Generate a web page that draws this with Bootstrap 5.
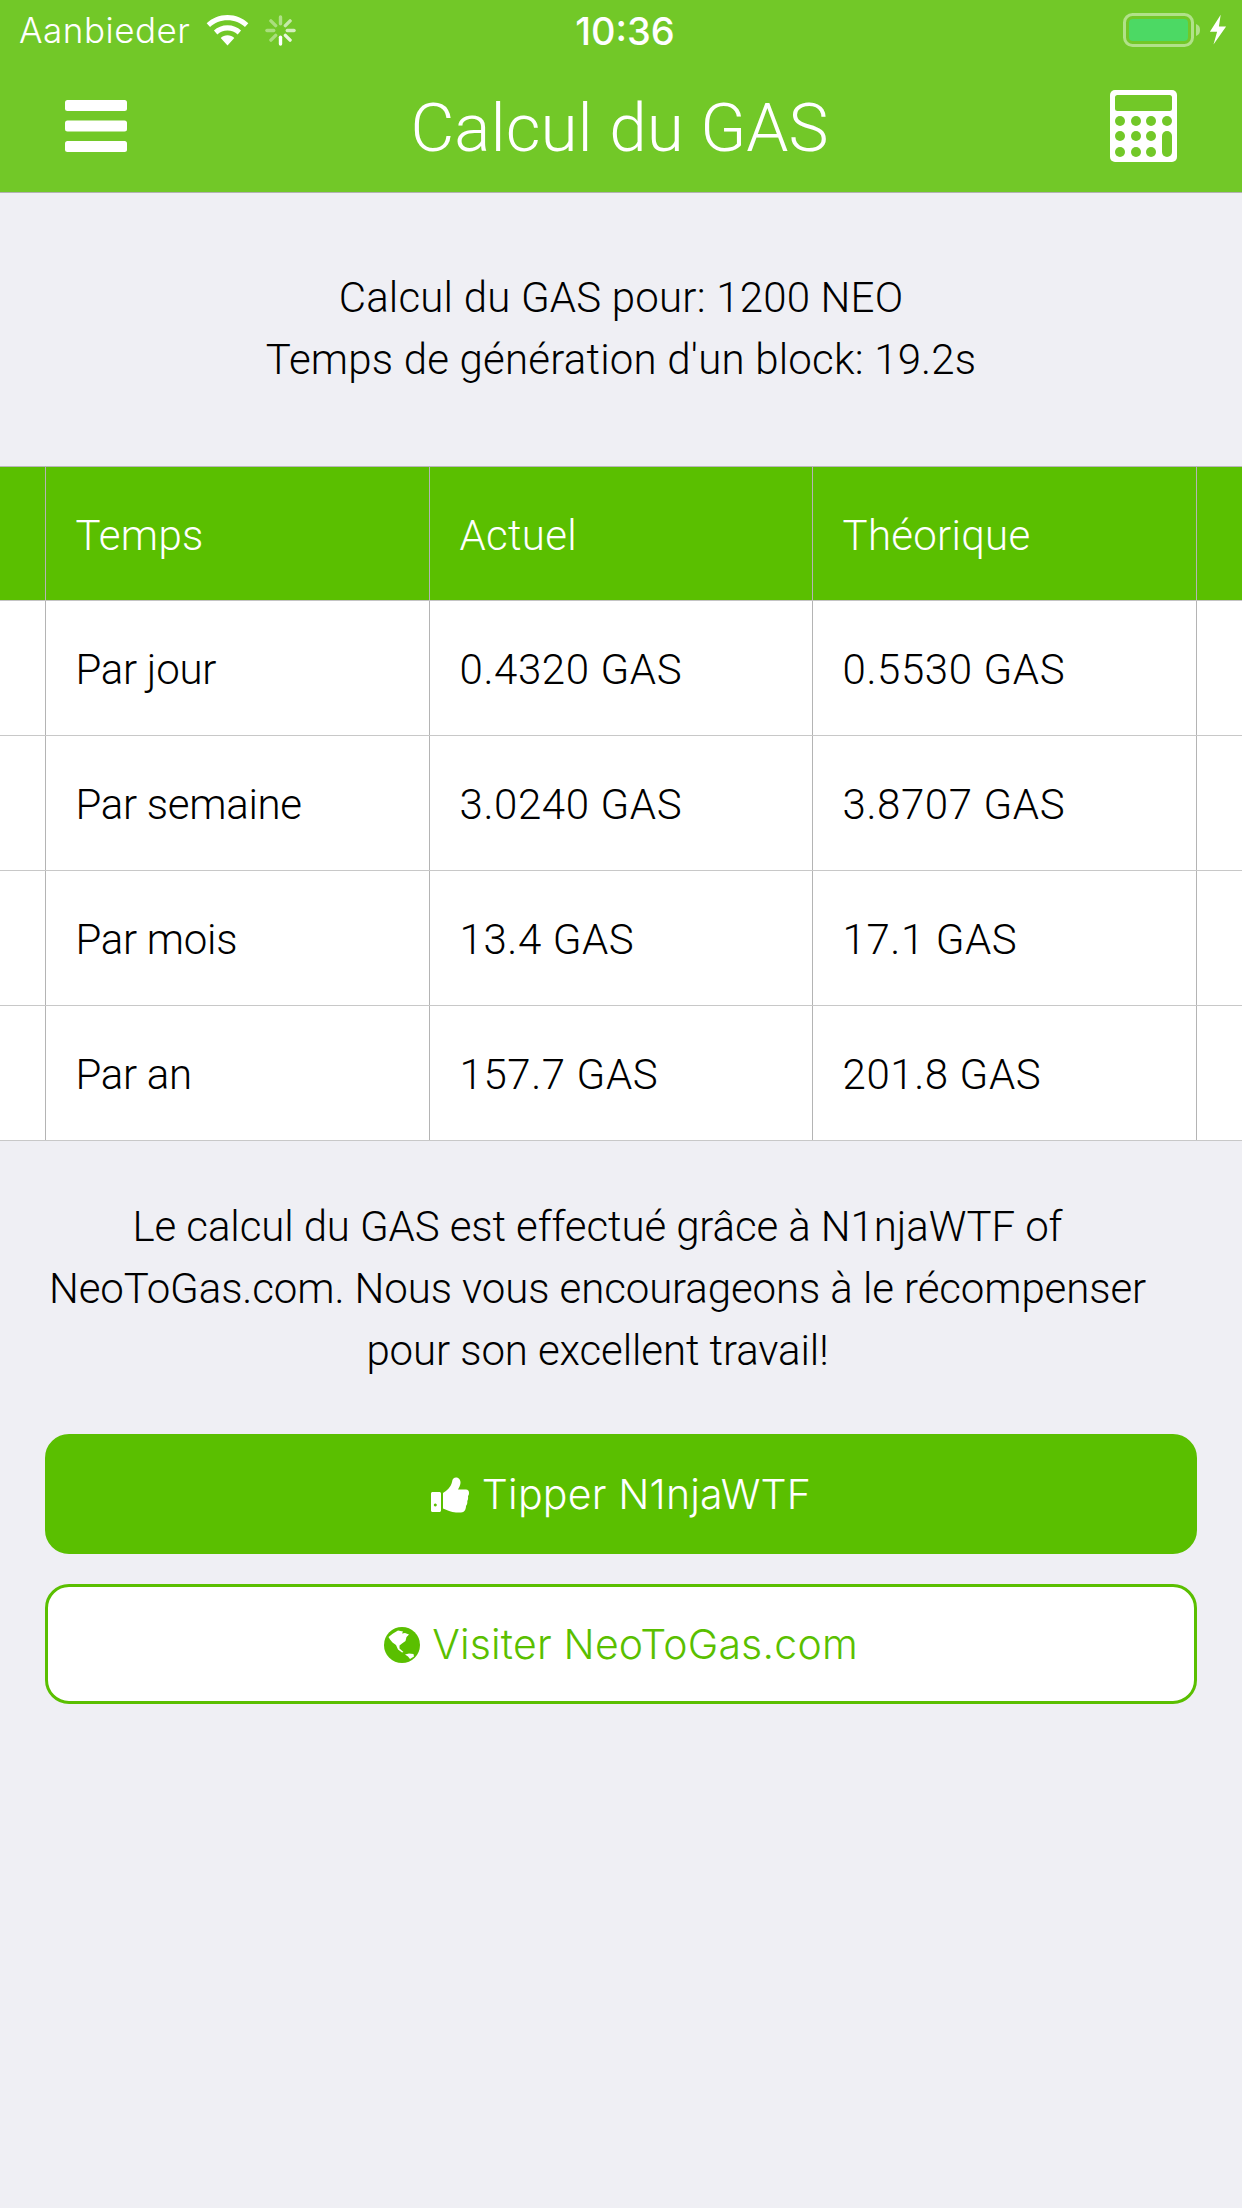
<!DOCTYPE html>
<html lang="fr">
<head>
  <meta charset="UTF-8" />
  <meta name="viewport" content="width=device-width, initial-scale=1.0"/>
  <title>Calcul du GAS</title>
  <link href="https://cdn.jsdelivr.net/npm/bootstrap@5.3.0/dist/css/bootstrap.min.css" rel="stylesheet"/>
  <style>
    body { background: #efeff4; font-family: Roboto, "Liberation Sans", sans-serif; font-weight: 300; color: #000; min-height: 2208px; }
    .top-area { background: #72c828; color: #fff; border-bottom: 1px solid #b2b2b2; }
    .status-row { height: 60px; padding: 0 15px 0 19px; font-family: Inter, sans-serif; font-size: 35px; font-weight: 300; letter-spacing: .5px; position: relative; }
    .status-time { position: absolute; left: 8px; right: 0; top: 9px; text-align: center; font-weight: 500; font-size: 38px; line-height: 44px; letter-spacing: 0; }
    .nav-row { height: 132px; padding: 0 65px; }
    .nav-title { font-size: 67.5px; font-weight: 300; padding-top: 3px; margin-left: 2px; }
    .intro-text { padding: 74px 20px 75px; font-size: 42px; line-height: 62px; text-align: center; letter-spacing: .2px; }
    .gas-table { margin: 0; table-layout: fixed; width: 1242px; font-size: 42px; background: #fff; }
    .gas-table th, .gas-table td { padding: 3px 0 0 30px; height: 135px; vertical-align: middle; border: 0; border-left: 1px solid #b4b4b4; border-bottom: 1px solid #c8c8c8; background: #fff; font-weight: 300; color: #000; letter-spacing: .6px; }
    .gas-table th { background: #5abf00; color: #fff; height: 134px; border-top: 1px solid #b8b8b8; border-bottom-color: #c4c4c4; letter-spacing: .3px; }
    .gas-table tbody td:nth-child(2) { letter-spacing: -.3px; }
    .gas-table tr > :first-child { border-left: 0; }
    .note-text { padding: 55px 92px 0 45px; font-size: 42px; line-height: 62px; text-align: center; letter-spacing: -.1px; }
    .action-area { padding: 52px 45px 0; gap: 30px; }
    .btn-tip, .btn-visit { font-family: Inter, sans-serif; font-weight: 300; font-size: 41px; height: 120px; border-radius: 24px; letter-spacing: .2px; padding-top: 8px; }
    .btn-tip { background: #5abf00; border: 3px solid #5abf00; color: #fff; gap: 13px; }
    .btn-visit { background: #fff; border: 3px solid #5abf00; color: #5abf00; gap: 12px; }
  </style>
</head>
<body>
  <header class="top-area">
    <div class="status-row d-flex align-items-center">
      <span>Aanbieder</span>
      <svg class="ms-3" width="43" height="31" viewBox="0 0 44 32"><path fill="#fff" d="M22 0C13.500 0 6 3.300 .5 8.500L4 12.500C8.500 8.200 15 5.500 22 5.500S35.500 8.200 40 12.500L43.500 8.500C38 3.300 30.500 0 22 0ZM22 10.500C16.500 10.500 11.500 12.600 8 16L11.500 20C14.200 17.500 18 16 22 16S29.800 17.500 32.500 20L36 16C32.500 12.600 27.500 10.500 22 10.500ZM22 21C19.300 21 16.900 22 15 23.700L22 31.500L29 23.700C27.100 22 24.700 21 22 21Z"/></svg>
      <svg class="ms-3" width="31" height="31" viewBox="0 0 32 32" stroke="#fff" stroke-width="3.500" stroke-linecap="round">
        <path d="M16 2V9" opacity=".45"/><path d="M25.900 6.100L21 11" opacity=".6"/><path d="M30 16H23" opacity=".7"/><path d="M25.900 25.900L21 21" opacity=".85"/><path d="M16 30V23"/><path d="M6.100 25.900L11 21" opacity=".4"/><path d="M2 16H9" opacity=".4"/><path d="M6.100 6.100L11 11" opacity=".4"/>
      </svg>
      <div class="status-time">10:36</div>
      <div class="ms-auto d-flex align-items-center">
        <svg width="78" height="34" viewBox="0 0 78 34"><rect x="1.500" y="1.500" width="68" height="31" rx="8" fill="none" stroke="#fff" stroke-opacity=".45" stroke-width="3"/><rect x="6" y="6" width="59" height="22" rx="4" fill="#4cd964"/><path d="M73 11C76 12 77 14 77 17S76 22 73 23Z" fill="#fff" fill-opacity=".45"/></svg>
        <svg class="ms-2" width="18" height="32" viewBox="0 0 20 34"><path fill="#fff" d="M13 0L1 19H9L5 33L19 13H11Z"/></svg>
      </div>
    </div>
    <nav class="nav-row d-flex align-items-center justify-content-between">
      <svg width="62" height="52" viewBox="0 0 62 52" fill="#fff"><rect width="62" height="11" rx="2.500"/><rect y="20.500" width="62" height="11" rx="2.500"/><rect y="41" width="62" height="11" rx="2.500"/></svg>
      <div class="nav-title">Calcul du GAS</div>
      <svg width="67" height="72" viewBox="0 0 67 72"><rect width="67" height="72" rx="5" fill="#fff"/><g fill="#72c828"><rect x="5" y="5" width="57" height="16" rx="2.500"/><circle cx="10" cy="31" r="5"/><circle cx="26" cy="31" r="5"/><circle cx="41" cy="31" r="5"/><circle cx="57" cy="31" r="5"/><circle cx="10" cy="46" r="5"/><circle cx="26" cy="46" r="5"/><circle cx="41" cy="46" r="5"/><circle cx="10" cy="62" r="5"/><circle cx="26" cy="62" r="5"/><circle cx="41" cy="62" r="5"/><rect x="52" y="41" width="10" height="26" rx="5"/></g></svg>
    </nav>
  </header>

  <main>
    <div class="intro-text">
      Calcul du GAS pour: 1200 NEO<br>
      Temps de génération d'un block: 19.2s
    </div>

    <table class="table gas-table">
      <colgroup><col style="width:45px"><col style="width:384px"><col style="width:383px"><col style="width:384px"><col></colgroup>
      <thead>
        <tr><th></th><th>Temps</th><th>Actuel</th><th>Théorique</th><th></th></tr>
      </thead>
      <tbody id="rows"></tbody>
    </table>

    <div class="note-text">
      Le calcul du GAS est effectué grâce à N1njaWTF of NeoToGas.com. Nous vous encourageons à le récompenser pour son excellent travail!
    </div>

    <div class="action-area d-flex flex-column">
      <button class="btn btn-tip d-flex align-items-center justify-content-center">
        <svg width="38" height="36" viewBox="0 0 38 36" fill="#fff"><path fill-rule="evenodd" d="M1.500 15H8.500C9.300 15 10 15.700 10 16.500V33.500C10 34.300 9.300 35 8.500 35H1.500C.7 35 0 34.300 0 33.500V16.500C0 15.700 .7 15 1.500 15ZM4.300 26.500A1.500 1.500 0 1 0 4.310 26.500Z"/><path d="M12 16C16 13.500 20 10 21 5C21.500 1.500 23 .5 25 .5C28 .5 29.800 3 29.500 6C29.300 8.500 28 10.500 27 12.500H35C37 12.500 38 14 38 16C38 17.500 37.500 18.500 37 19C37.300 21 37 23 36.300 24C36.500 26 36 28 35 29C35 32 33.500 35.500 30 35.500H25C20 35.500 16 33 12 31.500Z"/></svg>
        <span>Tipper N1njaWTF</span>
      </button>
      <button class="btn btn-visit d-flex align-items-center justify-content-center">
        <svg width="36" height="36" viewBox="0 0 36 36"><circle cx="18" cy="18" r="18" fill="#5abf00"/><path fill="#fff" d="M4.500 10L9 6.500L14 3.500L19 4.500L18 6.500L21 6L25 7.500L22.500 10L21.500 14L18 16.500L15.500 18.500L15.500 21.500L19.500 25L18 25.500L14 22.500L12 18L8.500 15.500L6 12.500Z"/><path fill="#fff" d="M21 27.500L25 26.500L29.500 27L30 29.500L26 32L24 29.500Z"/></svg>
        <span>Visiter NeoToGas.com</span>
      </button>
    </div>
  </main>

  <script>
    const rows = [
      ["Par jour", "0.4320 GAS", "0.5530 GAS"],
      ["Par semaine", "3.0240 GAS", "3.8707 GAS"],
      ["Par mois", "13.4 GAS", "17.1 GAS"],
      ["Par an", "157.7 GAS", "201.8 GAS"]
    ];
    document.getElementById("rows").innerHTML = rows.map(r =>
      `<tr><td></td>${r.map(c => `<td>${c}</td>`).join("")}<td></td></tr>`
    ).join("");
  </script>
  <script src="https://cdn.jsdelivr.net/npm/bootstrap@5.3.0/dist/js/bootstrap.bundle.min.js"></script>
</body>
</html>
